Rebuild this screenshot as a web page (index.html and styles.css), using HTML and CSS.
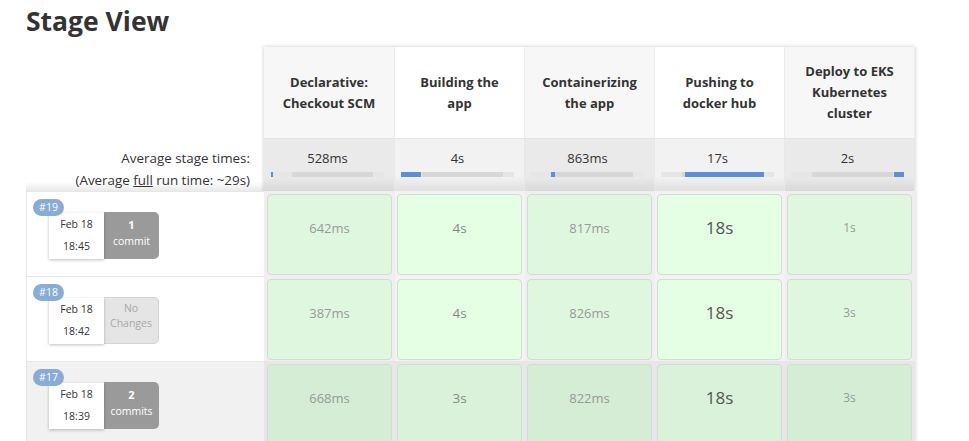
FILE: index.html
```html
<!DOCTYPE html>
<html>
<head>
<meta charset="utf-8">
<link rel="stylesheet" href="styles.css">
</head>
<body>
<div class="page">
  <h1 class="title">Stage View</h1>
  <div class="view">
    <div class="runs">
      <div class="runs-head"></div>
      <div class="runs-avg">
        <div>Average stage times:</div>
        <div>(Average <u>full</u> run time: ~29s)</div>
      </div>
      <div class="run">
        <span class="badge">#19</span>
        <div class="date"><div>Feb 18</div><div>18:45</div></div>
        <div class="changes"><div class="num">1</div><div>commit</div></div>
      </div>
      <div class="run">
        <span class="badge">#18</span>
        <div class="date"><div>Feb 18</div><div>18:42</div></div>
        <div class="changes none"><div>No</div><div>Changes</div></div>
      </div>
      <div class="run run-alt">
        <span class="badge">#17</span>
        <div class="date"><div>Feb 18</div><div>18:39</div></div>
        <div class="changes"><div class="num">2</div><div>commits</div></div>
      </div>
    </div>
    <div class="stages">
      <div class="head odd"><span>Declarative: Checkout SCM</span></div>
      <div class="head"><span>Building the app</span></div>
      <div class="head odd"><span>Containerizing the app</span></div>
      <div class="head"><span>Pushing to docker hub</span></div>
      <div class="head odd"><span>Deploy to EKS Kubernetes cluster</span></div>

      <div class="avg odd first"><div class="avg-time">528ms</div><div class="bar"><span class="dark"></span><span class="fill" style="left:0;width:2px"></span></div></div>
      <div class="avg"><div class="avg-time">4s</div><div class="bar"><span class="dark"></span><span class="fill" style="left:0;width:20px"></span></div></div>
      <div class="avg odd"><div class="avg-time">863ms</div><div class="bar"><span class="dark"></span><span class="fill" style="left:20px;width:4px"></span></div></div>
      <div class="avg"><div class="avg-time">17s</div><div class="bar"><span class="dark"></span><span class="fill" style="left:24px;width:79px"></span></div></div>
      <div class="avg odd"><div class="avg-time">2s</div><div class="bar"><span class="dark"></span><span class="fill" style="left:103px;width:10px"></span></div></div>

      <div class="slot odd first"><div class="cell">642ms</div></div>
      <div class="slot"><div class="cell mid">4s</div></div>
      <div class="slot odd"><div class="cell">817ms</div></div>
      <div class="slot"><div class="cell big">18s</div></div>
      <div class="slot odd"><div class="cell small">1s</div></div>

      <div class="slot odd first"><div class="cell">387ms</div></div>
      <div class="slot"><div class="cell mid">4s</div></div>
      <div class="slot odd"><div class="cell">826ms</div></div>
      <div class="slot"><div class="cell big">18s</div></div>
      <div class="slot odd"><div class="cell small">3s</div></div>

      <div class="slot odd first alt"><div class="cell">668ms</div></div>
      <div class="slot alt"><div class="cell mid">3s</div></div>
      <div class="slot odd alt"><div class="cell">822ms</div></div>
      <div class="slot alt"><div class="cell big">18s</div></div>
      <div class="slot odd alt"><div class="cell small">3s</div></div>
    </div>
  </div>
</div>
</body>
</html>
```

FILE: styles.css
```css
body {
  margin: 0;
  background: #fff;
  color: #333;
  font-family: "Open Sans", "Liberation Sans", sans-serif;
}

.page {
  padding-left: 26px;
}

.title {
  margin: 1px 0 6px;
  font-size: 26.5px;
  font-weight: 700;
  line-height: 40px;
  color: #333;
}

.view {
  display: flex;
  align-items: flex-start;
}

/* left column */
.runs {
  width: 238px;
  flex: none;
}

.runs-head {
  height: 92px;
}

.runs-avg {
  height: 52px;
  box-sizing: border-box;
  padding: 8px 14px 0 0;
  text-align: right;
  font-size: 13.4px;
  line-height: 22px;
  color: #333;
  background: linear-gradient(to bottom, #fff 0, #fff 82%, #e9e9e9 100%);
}

.run {
  position: relative;
  height: 85px;
  box-sizing: border-box;
  display: flex;
  align-items: flex-start;
  padding: 21px 0 0 22px;
  border: 1px solid #e6e6e6;
  border-bottom: none;
  border-right: none;
  background: #fff;
}

.run-alt {
  background: #f1f1f1;
}

.badge {
  position: absolute;
  top: 7px;
  left: 6px;
  width: 31px;
  height: 17px;
  border-radius: 9px;
  background: #88acd5;
  color: #fff;
  font-size: 10.5px;
  line-height: 17px;
  text-align: center;
  z-index: 2;
}

.date {
  width: 55px;
  height: 46px;
  background: #fff;
  box-shadow: 0 1px 3px rgba(0, 0, 0, 0.25);
  text-align: center;
  font-size: 10.5px;
  line-height: 22px;
  color: #333;
  position: relative;
  z-index: 1;
}

.changes {
  width: 55px;
  height: 47px;
  margin-top: -1px;
  box-sizing: border-box;
  padding-top: 5px;
  border-radius: 0 5px 5px 0;
  background: #9a9a9a;
  color: #fff;
  text-align: center;
  font-size: 10.5px;
  line-height: 16px;
}

.changes .num {
  font-weight: 700;
  font-size: 11px;
}

.changes.none {
  padding-top: 3px;
  background: #e5e5e5;
  border: 1px solid #d4d4d4;
  border-left: none;
  color: #a8a8a8;
  line-height: 15px;
}

/* stage table */
.stages {
  display: grid;
  grid-template-columns: 131px repeat(4, 130px);
  box-shadow: 0 0 4px rgba(0, 0, 0, 0.22);
}

.head {
  height: 92px;
  box-sizing: border-box;
  display: flex;
  align-items: center;
  justify-content: center;
  padding: 0 14px;
  text-align: center;
  font-size: 13px;
  font-weight: 700;
  line-height: 21px;
  color: #333;
  background: #fff;
  border-right: 1px solid #ececec;
  border-bottom: 1px solid #e3e3e3;
}

.head.odd {
  background: #f7f7f7;
}

.avg {
  height: 52px;
  box-sizing: border-box;
  padding: 9px 0 0 6px;
  background: linear-gradient(to bottom, #f2f2f2 0, #f2f2f2 72%, #e0e0e0 100%);
  border-right: 1px solid #e8e8e8;
}

.avg.odd {
  background: linear-gradient(to bottom, #eaeaea 0, #eaeaea 72%, #d9d9d9 100%);
}

.avg.first {
  padding-left: 7px;
}

.avg-time {
  width: 113px;
  text-align: center;
  font-size: 13px;
  line-height: 20px;
  color: #333;
}

.bar {
  position: relative;
  width: 113px;
  height: 5px;
  margin-top: 4px;
  background: #e6e6e6;
}

.bar .dark {
  position: absolute;
  top: 0;
  left: 21px;
  width: 81px;
  height: 5px;
  background: #d7d7d7;
}

.bar .fill {
  position: absolute;
  top: 0;
  height: 5px;
  background: #5d8fd6;
}

.slot {
  height: 85px;
  box-sizing: border-box;
  padding: 3px 3px 1px 2px;
  background: #f3f3f3;
}

.slot.odd {
  background: #efefef;
}

.slot.first {
  padding-left: 3px;
}

.slot.alt {
  background: #e7e7e7;
}

.cell {
  height: 81px;
  box-sizing: border-box;
  padding-top: 23px;
  border: 1px solid #d2dcd2;
  border-radius: 4px;
  background: #e5ffe5;
  text-align: center;
  font-size: 13px;
  line-height: 20px;
  color: #999;
}

.slot.odd .cell {
  background: #dff7df;
}

.slot.alt .cell {
  background: #daf2da;
}

.slot.odd.alt .cell {
  background: #d4edd4;
}

.cell.mid {
  font-size: 13.5px;
  color: #888;
}

.cell.big {
  font-size: 17px;
  color: #555;
}

.cell.small {
  font-size: 12px;
  color: #9a9a9a;
}
```
